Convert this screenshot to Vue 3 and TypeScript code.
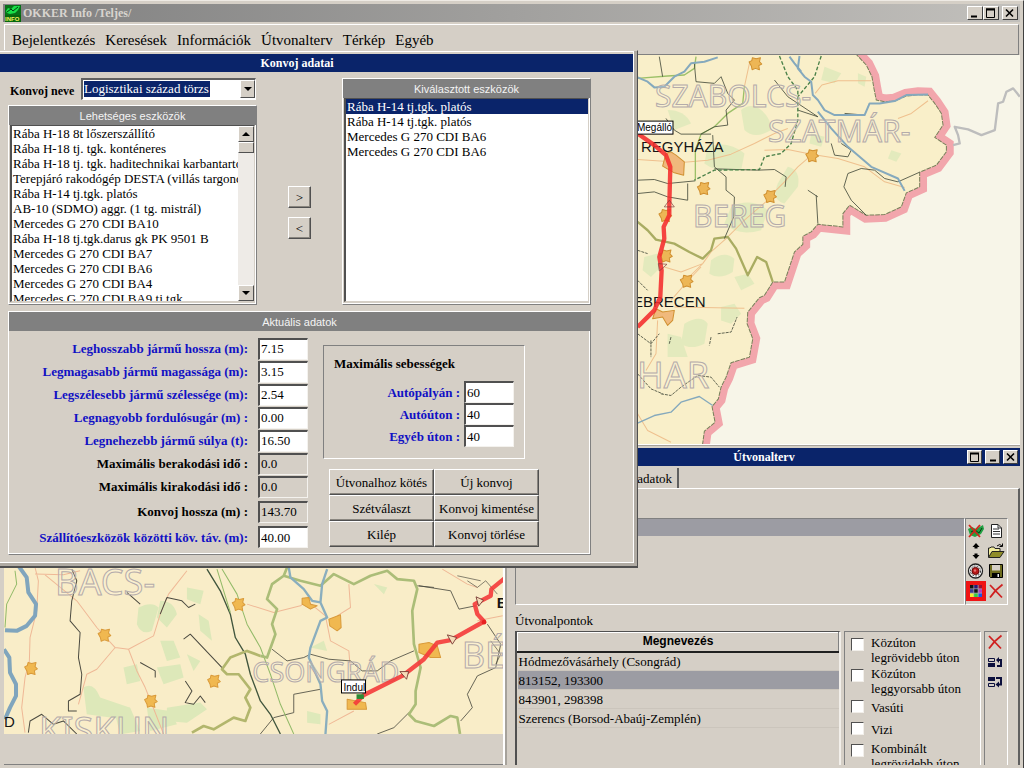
<script setup lang="ts">
import { ref } from 'vue'

interface Field {
  id: string
  label: string
  value: string
  kind: 'edit' | 'locked'
}

const menus = ['Bejelentkezés', 'Keresések', 'Információk', 'Útvonalterv', 'Térkép', 'Egyéb']

const convoy = ref('Logisztikai század törzs')

const available = [
  'Rába H-18 8t lőszerszállító',
  'Rába H-18 tj. tgk. konténeres',
  'Rába H-18 tj. tgk. haditechnikai karbantartó',
  'Terepjáró rakodógép DESTA (villás targonca)',
  'Rába H-14 tj.tgk. platós',
  'AB-10 (SDMO) aggr. (1 tg. mistrál)',
  'Mercedes G 270 CDI BA10',
  'Rába H-18 tj.tgk.darus gk PK 9501 B',
  'Mercedes G 270 CDI BA7',
  'Mercedes G 270 CDI BA6',
  'Mercedes G 270 CDI BA4',
  'Mercedes G 270 CDI BA9 tj.tgk',
]

const chosen = [
  'Rába H-14 tj.tgk. platós',
  'Rába H-14 tj.tgk. platós',
  'Mercedes G 270 CDI BA6',
  'Mercedes G 270 CDI BA6',
]

const availableSel = ref<number[]>([])
const chosenSel = ref<number[]>([0])

const fields = ref<Field[]>([
  { id: 'len', label: 'Leghosszabb jármű hossza (m):', value: '7.15', kind: 'edit' },
  { id: 'hgt', label: 'Legmagasabb jármű magassága (m):', value: '3.15', kind: 'edit' },
  { id: 'wid', label: 'Legszélesebb jármű szélessége (m):', value: '2.54', kind: 'edit' },
  { id: 'rad', label: 'Legnagyobb fordulósugár (m) :', value: '0.00', kind: 'edit' },
  { id: 'wgt', label: 'Legnehezebb jármű súlya (t):', value: '16.50', kind: 'edit' },
  { id: 'load', label: 'Maximális berakodási idő :', value: '0.0', kind: 'locked' },
  { id: 'unload', label: 'Maximális kirakodási idő :', value: '0.0', kind: 'locked' },
  { id: 'total', label: 'Konvoj hossza (m) :', value: '143.70', kind: 'locked' },
  { id: 'dist', label: 'Szállítóeszközök közötti köv. táv. (m):', value: '40.00', kind: 'edit' },
])

const speeds = ref([
  { id: 'motorway', label: 'Autópályán :', value: '60' },
  { id: 'highway', label: 'Autóúton :', value: '40' },
  { id: 'other', label: 'Egyéb úton :', value: '40' },
])

const actions = [
  'Útvonalhoz kötés', 'Új konvoj',
  'Szétválaszt', 'Konvoj kimentése',
  'Kilép', 'Konvoj törlése',
]

const points = [
  'Hódmezővásárhely (Csongrád)',
  '813152, 193300',
  '843901, 298398',
  'Szerencs (Borsod-Abaúj-Zemplén)',
]
const activePoint = ref(1)

const modes = ref([
  { label: 'Közúton legrövidebb úton', on: false },
  { label: 'Közúton leggyorsabb úton', on: false },
  { label: 'Vasúti', on: false },
  { label: 'Vizi', on: false },
  { label: 'Kombinált legrövidebb úton', on: false },
])

const border =
  'M672 160L705 195L722 230L728 265L735 300L760 305L790 303L825 288L860 284L890 285L910 310L930 340L935 375L910 412L945 435L945 455L915 495L865 516L865 560L825 578L810 620L760 643L705 645L655 615L635 640L635 680L560 672L540 695L515 708L515 732L490 755L475 800L460 845L425 845L400 885L385 892L350 935L348 970L365 1015L355 1070L300 1087L285 1130L270 1160L262 1195L243 1218L252 1265L220 1292L212 1350'
const country = border + 'L0 1350L0 160Z'

const towns = [
  [368, 190, 14], [540, 466, 16], [214, 564, 15], [415, 588, 17], [98, 645, 14],
  [98, 766, 12], [162, 842, 14],
]
const southTowns = [
  [308, 222, 14], [90, 322, 16], [714, 130, 18], [634, 360, 12], [452, 420, 19],
]
</script>

<template>
  <div class="app">
    <header class="titlebar">
      <svg class="appicon" viewBox="0 0 16 17" aria-hidden="true">
        <rect width="16" height="10" fill="#087018" />
        <path d="M1 6L3 3L6 4L9 1L15 1L13 5L10 8L5 9L2 8Z" fill="#18e048" />
        <path d="M2 7L6 4L8 6L13 2" stroke="#043c0c" fill="none" />
        <rect y="10" width="16" height="7" fill="#05690c" />
        <text x="0" y="16" font-size="6" font-weight="700" font-family="Liberation Sans, sans-serif" fill="#f5f060">INFO</text>
      </svg>
      <h1>OKKER Info /Teljes/</h1>
      <div class="winbtns">
        <button class="wb" aria-label="Kis méret"><svg viewBox="0 0 12 10"><path d="M2 8.5h6" stroke="#000" stroke-width="2" /></svg></button>
        <button class="wb" aria-label="Teljes méret"><svg viewBox="0 0 12 10"><path d="M1.5 1v8.500h8V1M1 1h9" stroke="#000" fill="none" /><path d="M1 1.500h9" stroke="#000" stroke-width="2" /></svg></button>
        <button class="wb last" aria-label="Bezárás"><svg viewBox="0 0 12 10"><path d="M2 1.500L9 8.500M9 1.500L2 8.500" stroke="#000" stroke-width="1.600" /></svg></button>
      </div>
    </header>

    <nav class="menubar">
      <button v-for="m in menus" :key="m">{{ m }}</button>
    </nav>

    <main class="desktop">
      <svg class="map" viewBox="4 55 1016 678" preserveAspectRatio="xMinYMin slice" role="img" aria-label="Térkép">
        <rect x="4" y="55" width="1016" height="678" fill="#f7f5e8" />
        <!-- north-east section -->
        <g transform="translate(630 0) scale(.33333)" fill="none" stroke-linejoin="round">
          <path :d="border" stroke="#f2a6ac" stroke-width="44" stroke-linejoin="miter" />
          <path :d="country" fill="#f9efc9" />
          <g fill="#dce9b9" opacity=".75">
            <path d="M330 330q30-25 60 0t30 60q-50 30-80 0z" />
            <path d="M230 440q60-20 110 20l-10 50q-70 10-110-20z" />
            <path d="M470 500q40 10 30 60l-40 50q-40-10-20-60z" />
            <path d="M110 330q50 0 70 40l-50 20z" />
            <path d="M580 200l50 20-20 30-40-10zM680 220l25 10-5 30-20-10z" />
            <path d="M540 400l40 10-10 30-35-10zM780 450l30 10-15 25-25-10z" />
            <path d="M240 780q40-30 70-5l-5 40q-40 25-70 5z" />
            <path d="M40 770l40-10 10 40-30 30-25-20z" />
            <path d="M160 970q50-30 70 0l-10 60q-40 20-70 0zM270 920l40-10 20 30-30 30-30-10z" />
            <path d="M110 1000l40 10 20 60-60 0zM310 830l40-10 20 30-40 20z" />
            <path d="M300 620q60-30 110 10l-20 60q-70 20-110-20z" />
          </g>
          <path :d="border" stroke="#77805a" stroke-width="3" stroke-dasharray="14 3" />
          <g stroke="#efc08e" stroke-width="3">
            <path d="M552 280L572 255L620 242L720 242M800 355L840 340L890 302M160 486L230 480L300 462L370 430L430 400L470 385M400 450L470 448L540 462L620 475L700 500L760 545L820 562M540 466L500 500L460 545L415 590M20 478L110 484M340 260L355 190M285 715L340 660L410 600" />
            <path d="M100 800L150 815L215 790L240 755L285 715M120 900L170 842L210 800M130 920L340 924M80 960L75 1060L45 1110M20 1240L50 1290L120 1325M162 842L215 790" />
          </g>
          <g stroke="#9aae66" stroke-width="4">
            <path d="M195 170L190 205L160 225L110 228L20 235M340 258L335 310L290 340L250 380L210 402L193 450L193 540" stroke="#9cc068" />
            <path d="M20 665L50 690L75 718L130 730L175 755L215 775L240 750L250 715L290 710L315 745L350 825L378 770L405 785L425 845" stroke="#a9ac62" stroke-width="7" />
          </g>
          <g stroke="#454b3b" stroke-width="2.500">
            <path d="M85 170L95 230M190 190L195 245L250 250L270 230L290 280L310 300L285 330L290 375L250 380L210 402M20 540L70 538L110 550L193 542M20 580L70 575L110 590L170 600L170 550M245 405L250 500L285 530L285 570L310 590L308 650L280 715M250 506L380 510L430 508L465 530L462 560M555 585L560 670M530 570L560 590M105 355L130 390L150 402L240 402" />
            <path d="M600 430L610 465L650 470L660 450L630 430M690 505L650 520L638 560L660 600L705 645M690 505L730 510L760 535L800 545L865 516M500 330L560 350L470 290L430 240M640 340L700 345" />
            <path d="M90 1180L120 1185L150 1160L200 1125L240 1130L265 1160M20 1120L60 1165L95 1180M60 1020L60 1070M120 1010L115 1030M240 1010L235 1035M260 1000L300 995L318 950M20 750L50 760M20 840L50 870M20 1000L60 1030L85 1000" stroke-dasharray="9 3" />
          </g>
          <g stroke="#4a8048" stroke-width="4" stroke-dasharray="11 6">
            <path d="M445 168L470 230L500 270L500 360L480 430L450 460L400 470L385 508L250 510L190 540M570 168L550 230L500 290" />
          </g>
          <g stroke="#85a9bd" stroke-width="6">
            <path d="M20 232L50 245L70 262L100 260L130 230L160 215L180 190L220 185L260 172" />
            <path d="M505 168L500 205L520 230L540 245L545 285L560 300L580 330L610 345L700 345L715 310L745 310L790 303L825 285L890 283" />
            <path d="M475 170L490 190L510 215M560 335L600 385L650 440L720 500L800 535L820 572" />
            <path d="M20 1268L70 1245L120 1235L150 1205L205 1188L245 1215" stroke-width="4" />
          </g>
          <path d="M965 435L985 430L980 405L970 380L1010 388L1050 405L1090 390L1100 310L1115 305L1125 275L1145 265L1165 290" stroke="#bdbdbd" stroke-width="7" />
          <g fill="#edb655" stroke="#d09030" stroke-width="3">
            <path v-for="(t, i) in towns" :key="i" :d="`M${t[0] - t[2]} ${t[1] - 4}l8-4l2-9l11 3l13-3l-3 12l7 7l-9 5l2 12l-12-4l-10 4l-2-10z`" />
            <path d="M105 460L120 455L135 465L160 485L158 525L130 518L95 498Z" fill="#f0b97c" />
            <path d="M75 925L95 935L130 930L125 960L110 975L95 950L65 955Z" fill="#f0b97c" />
          </g>
        </g>
        <g class="region">
          <text x="654" y="107">SZABOLCS-</text>
          <text x="767" y="142">SZATMÁR-</text>
          <text x="692" y="227">BEREG</text>
          <text class="large" x="636" y="388">HAR</text>
        </g>
        <g class="city">
          <text x="640" y="152">REGYHÁZA</text>
          <text x="632" y="307">EBRECEN</text>
        </g>
        <g transform="translate(630 0) scale(.33333)" fill="none">
          <path d="M20 400L70 435L105 465L118 500L115 615L115 645L98 680L100 715L85 770L92 810L88 890L70 930L40 960L20 980" stroke="#f42c2c" stroke-opacity=".88" stroke-width="13" stroke-linejoin="round" />
          <path d="M100 620L115 600L130 620ZM82 790L108 792L85 812Z" stroke="#7a3838" stroke-width="2" />
        </g>
        <g>
          <rect x="630" y="121" width="42" height="13" fill="#fff" stroke="#000" />
          <text class="flag" x="636" y="131">Megálló</text>
        </g>

        <!-- southern section -->
        <g transform="translate(0 560) scale(.33333)" fill="none" stroke-linejoin="round">
          <path d="M12 0H1506V519H12Z" fill="#f9edc8" />
          <g fill="#dae8b8" opacity=".9">
            <path d="M415 140q40-20 60 0l-20 70q-30 15-45-20zM480 120q40 0 50 40l-30 40-30-30z" />
            <path d="M560 80l50 10-10 40-40-15zM595 160l30 20 10 60-35-30z" />
            <path d="M250 380q30-20 50 30l90 30-20 35-110-15zM370 320l40-10 10 50-40 10z" />
            <path d="M470 320l70-10 10 40-60 20zM500 440l100-15 20 20-60 40-60-5zM480 240l40 0 20 50-40 10zM560 280l40 20-20 30z" />
            <path d="M440 440l70 10 20 40-80 20zM340 440l50 0 30 70-60 10z" />
            <path d="M1120 70l40 10-10 20zM930 260l40-20 10 30zM920 450l40 10 0 30-40-5z" />
          </g>
          <g stroke="#efb896" stroke-width="3">
            <path d="M105 20L115 60L110 150L90 230L88 300L75 350L65 440L75 515M105 40L190 42L240 30M135 42L230 120L290 200L345 260L385 265L460 225L480 160L505 100L560 30M385 265L410 330L435 380L455 430L490 519M345 260L290 325L260 340L235 430" />
            <path d="M740 130L820 155L900 135L920 120L975 165L990 240L1045 270L1050 330M1045 70L1050 140L1010 165M985 490L1060 450M1325 25L1400 70L1430 80M1430 180L1506 165" />
          </g>
          <g stroke="#4b4a40" stroke-width="3">
            <path d="M215 25L230 60L215 120L210 180L240 215L235 290L245 340L240 400L205 420L205 450L230 450M500 110L545 120L565 140L585 130M500 110L480 160M380 95L420 130M550 235L570 220L665 320M420 305L465 330L465 350M555 360L575 390L555 425L580 430L600 405L615 425M85 515L90 480L125 460L160 490L190 480L230 519" />
            <path d="M815 265L860 300L910 290L930 280L985 295L1050 300L1085 330L1130 330L1170 300L1240 270M1255 75L1350 90L1375 145L1425 135M1250 75L1300 80M1460 190L1500 250L1485 320L1430 345L1400 400L1415 440L1380 480M1225 455L1180 500L1130 519M780 519L820 470L880 455L880 400L960 385" stroke-width="2.500" />
            <path d="M1400 60L1430 80L1455 60L1490 100M1370 45L1440 60" stroke-width="2" />
            <path d="M1470 240L1500 280L1485 310" stroke-width="2" />
          </g>
          <path d="M620 25L660 90L690 160L705 230L735 280L750 340L780 420L810 460L840 519" stroke="#40553d" stroke-width="4" />
          <path d="M665 25L710 100L740 190L780 260L810 340L840 430L880 519M690 155L650 25M45 30L50 70L20 130L15 200" stroke="#92ba68" stroke-width="3" />
          <path d="M575 515L610 495L640 505L700 470L735 480L750 440L735 410L750 385L715 340L680 340L665 325L690 290L740 270L780 285" stroke="#b2b66d" stroke-width="8" />
          <path d="M780 285L800 290L825 220L815 190L830 145L800 115L815 70L850 45L860 20M850 45L900 60L960 75L1000 40L1060 70L1110 45L1160 30L1190 55L1240 60L1250 85L1235 150L1240 250L1260 320L1245 390L1245 430L1225 460L1245 480L1300 495L1350 465L1370 470L1378 519" stroke="#abbd78" stroke-width="8" />
          <path d="M55 15L80 50L85 95L108 130L105 165L80 195L50 210L15 208M12 265L28 290L30 335L48 370L48 405L30 440L15 475" stroke="#80a5bd" stroke-width="12" />
          <path d="M865 20L870 50L910 85L935 120L960 125L965 70L980 25M960 125L980 170L960 180L930 260L925 290L960 370L965 420L980 450L975 519" stroke="#8aaebe" stroke-width="7" />
          <g fill="#f0b850" stroke="#d99a3a" stroke-width="3">
            <path v-for="(t, i) in southTowns" :key="i" :d="`M${t[0] - t[2]} ${t[1] - 4}l8-4l2-9l11 3l13-3l-3 12l7 7l-9 5l2 12l-12-4l-10 4l-2-10z`" />
            <path d="M905 112L925 110L930 130L950 135L930 145L905 130ZM985 175L1020 162L1022 200L1010 210L988 195ZM1255 250L1285 245L1310 255L1320 290L1290 290L1255 275ZM1040 415L1095 425L1098 445L1040 445Z" />
          </g>
        </g>
        <g class="region">
          <text class="large" x="55" y="594">BÁCS-</text>
          <text class="large" x="39" y="742">KISKUN</text>
          <text class="small" x="252" y="681">CSONGRÁD</text>
          <text class="large" x="461" y="667">BÉ</text>
        </g>
        <text class="city" x="4" y="726">D</text>
        <text class="city strong" x="496" y="607">B</text>
        <g transform="translate(250 560) scale(.33333)" fill="none">
          <path d="M765 50L722 85L720 105L672 130L680 160L700 182L600 238L560 245L540 270L520 295L455 345L340 402L312 430" stroke="#f43a3a" stroke-opacity=".9" stroke-width="13" stroke-linejoin="round" />
          <circle cx="700" cy="184" r="7" fill="#e62222" />
          <path d="M590 222L618 230L605 250ZM448 332L474 332L468 355ZM676 108L698 118L684 136Z" fill="#f6dcb8" stroke="#70302c" stroke-width="2.500" />
          <path d="M318 400h22v14h-22z" fill="#2c8a35" />
        </g>
        <rect x="341" y="679" width="24" height="13" fill="#fff" stroke="#000" />
        <text class="flag" x="343" y="690">Indul</text>
      </svg>
      <div class="mapstatus"></div>
      <section class="route">
        <header class="bluebar">
          <h2>Útvonalterv</h2>
          <div class="winbtns">
            <button class="wb" aria-label="Teljes méret"><svg viewBox="0 0 12 10"><path d="M1.500 1v8.500h8V1" stroke="#000" fill="none" /><path d="M1 1.500h9" stroke="#000" stroke-width="2" /></svg></button>
            <button class="wb" aria-label="Kis méret"><svg viewBox="0 0 12 10"><path d="M3 8.500h6" stroke="#000" stroke-width="2" /></svg></button>
            <button class="wb" aria-label="Bezárás"><svg viewBox="0 0 12 10"><path d="M2 1.500L9 8.500M9 1.500L2 8.500" stroke="#000" stroke-width="1.600" /></svg></button>
          </div>
        </header>
        <div class="tabs" role="tablist">
          <button role="tab" aria-selected="true">adatok</button>
        </div>
        <div class="page">
          <div class="upper">
            <div class="routelist"><div class="routerow"></div></div>
            <div class="tools">
              <button aria-label="Útvonal törlése térképről">
                <svg viewBox="0 0 18 18"><path d="M1 7L5 5L9 7L16 3L17 7L14 12L8 15L3 13Z" fill="#22a043" /><path d="M4 10L8 8L12 11L15 6" stroke="#063c10" fill="none" /><path d="M2 3L13 15M13 3L2 15" stroke="#d2261c" stroke-width="1.800" /></svg>
              </button>
              <button aria-label="Új">
                <svg viewBox="0 0 18 18"><path d="M4.500 2.500H11L14.500 6V15.500H4.500Z" fill="#fff" stroke="#222" /><path d="M11 2.500V6H14.500M6 7h6M6 9.500h7M6 12h7" stroke="#333" fill="none" /></svg>
              </button>
              <button aria-label="Mozgatás">
                <svg viewBox="0 0 18 18"><path d="M9 1L12.500 5H10.500V6.500H7.500V5H5.500ZM9 17L5.500 13H7.500V11.500H10.500V13H12.500Z" fill="#000" /></svg>
              </button>
              <button aria-label="Megnyitás">
                <svg viewBox="0 0 18 18"><path d="M1.500 15V6H3L4 5H7L8 6.500H13V9" fill="#f2ec9c" stroke="#222" /><path d="M1.500 15.500L5 9.500H17L13 15.500Z" fill="#8f8c28" stroke="#222" /><path d="M10 4q3-3 5 0M15.500 1.500V4.500H12.500" stroke="#000" fill="none" /></svg>
              </button>
              <button aria-label="Cél">
                <svg viewBox="0 0 18 18"><circle cx="8.500" cy="9" r="7" fill="#fff" stroke="#222" stroke-width="1.300" /><circle cx="8.500" cy="9" r="5" fill="none" stroke="#333" stroke-dasharray="2 1" /><circle cx="8.500" cy="9" r="3.600" fill="#b81818" stroke="#5b0808" /><circle cx="8" cy="8.500" r="1.200" fill="#e87070" /></svg>
              </button>
              <button aria-label="Mentés">
                <svg viewBox="0 0 18 18"><path d="M2.500 2.500H15.500V15.500H3.500L2.500 14.500Z" fill="#6d6b1e" stroke="#000" /><path d="M5 3H13V8.500H5Z" fill="#d5cfc6" /><path d="M5 11H13V15.500H5Z" fill="#000" /><path d="M10.500 12H12V15H10.500Z" fill="#eee" /></svg>
              </button>
              <button class="hot" aria-label="Színek">
                <svg viewBox="0 0 18 18"><path d="M3 3h12v12H3z" fill="#a8a8b0" /><path d="M3 3h3.500v3.500H3z" fill="#111" /><path d="M7.200 3h3.500v3.500H7.200z" fill="#281a78" /><path d="M11.500 3H15v3.500h-3.500z" fill="#a01030" /><path d="M3 7.200h3.500v3.500H3z" fill="#3b3b90" /><path d="M7.200 7.200h3.500v3.500H7.200z" fill="#111" /><path d="M11.500 7.200H15v3.500h-3.500z" fill="#b040c0" /><path d="M3 11.500h3.500V15H3z" fill="#f0ec30" /><path d="M7.200 11.500h3.500V15H7.200z" fill="#30d040" /><path d="M11.500 11.500H15V15h-3.500z" fill="#2050e0" /></svg>
              </button>
              <button aria-label="Törlés">
                <svg viewBox="0 0 18 18"><path d="M3 3L15 15.500M15.500 2.500Q8 8 3 15.500" stroke="#cf2020" stroke-width="1.800" fill="none" /></svg>
              </button>
            </div>
          </div>
          <h3>Útvonalpontok</h3>
          <div class="lower">
            <div class="tablebox">
              <table>
                <thead><tr><th scope="col">Megnevezés</th></tr></thead>
                <tbody>
                  <tr v-for="(p, i) in points" :key="p" :class="{ active: i === activePoint }" @click="activePoint = i"><td>{{ p }}</td></tr>
                </tbody>
              </table>
            </div>
            <div class="modes">
              <label v-for="m in modes" :key="m.label"><input v-model="m.on" type="checkbox" /><span>{{ m.label }}</span></label>
            </div>
            <div class="sidetools">
              <button aria-label="Pont törlése">
                <svg viewBox="0 0 18 18"><path d="M3 3L15 15.500M15.500 2.500Q8 8 3 15.500" stroke="#cf2020" stroke-width="1.800" fill="none" /></svg>
              </button>
              <button aria-label="Beszúrás elé">
                <svg viewBox="0 0 18 18"><path d="M2.500 5.500h6v3h-6z" fill="none" stroke="#0b0f3c" /><path d="M2 10h7v4H2z" fill="#0b0f3c" /><path d="M11 13h4V7H12" stroke="#0b0f3c" stroke-width="2" fill="none" /><path d="M10 7L13 4V10Z" fill="#0b0f3c" /></svg>
              </button>
              <button aria-label="Beszúrás mögé">
                <svg viewBox="0 0 18 18"><path d="M2 4h7v4H2z" fill="#0b0f3c" /><path d="M2.500 10.500h6v3h-6z" fill="none" stroke="#0b0f3c" /><path d="M10 5h5V11.500H12" stroke="#0b0f3c" stroke-width="2" fill="none" /><path d="M9.500 11.500L13 8.500V14.500Z" fill="#0b0f3c" /></svg>
              </button>
            </div>
          </div>
        </div>
      </section>
    </main>

    <section class="dialog" role="dialog" aria-labelledby="dlg-title">
      <header class="bluebar"><h2 id="dlg-title">Konvoj adatai</h2></header>
      <div class="dbody">
        <div class="pickers">
          <div class="left">
            <div class="combo">
              <label for="convoy">Konvoj neve</label>
              <div class="combobox">
                <select id="convoy" v-model="convoy"><option>Logisztikai század törzs</option></select>
                <span class="arrow"><svg viewBox="0 0 12 12"><path d="M2 4h8L6 8z" /></svg></span>
              </div>
            </div>
            <div class="panel grow">
              <label class="cap" for="avail">Lehetséges eszközök</label>
              <div class="listbox">
                <select id="avail" v-model="availableSel" multiple size="12">
                  <option v-for="(a, i) in available" :key="i" :value="i">{{ a }}</option>
                </select>
                <div class="scroll">
                  <button aria-label="Fel"><svg viewBox="0 0 12 12"><path d="M2 8h8L6 4z" /></svg></button>
                  <div class="thumb"></div>
                  <button class="down" aria-label="Le"><svg viewBox="0 0 12 12"><path d="M2 4h8L6 8z" /></svg></button>
                </div>
              </div>
            </div>
          </div>
          <div class="movers">
            <button>&gt;</button>
            <button>&lt;</button>
          </div>
          <div class="panel right">
            <label class="cap" for="chosen">Kiválasztott eszközök</label>
            <div class="listbox">
              <select id="chosen" v-model="chosenSel" multiple size="12">
                <option v-for="(c, i) in chosen" :key="i" :value="i">{{ c }}</option>
              </select>
            </div>
          </div>
        </div>

        <div class="panel current">
          <h3 class="cap">Aktuális adatok</h3>
          <div class="currentbody">
            <div class="form">
              <template v-for="f in fields" :key="f.id">
                <label :for="f.id" :class="f.kind">{{ f.label }}</label>
                <input :id="f.id" v-model="f.value" type="text" :class="f.kind" :readonly="f.kind === 'locked'" />
              </template>
            </div>
            <div class="side">
              <fieldset>
                <legend>Maximális sebességek</legend>
                <div class="speeds">
                  <template v-for="s in speeds" :key="s.id">
                    <label :for="s.id" class="edit">{{ s.label }}</label>
                    <input :id="s.id" v-model="s.value" type="text" />
                  </template>
                </div>
              </fieldset>
              <div class="actions">
                <button v-for="a in actions" :key="a">{{ a }}</button>
              </div>
            </div>
          </div>
        </div>
      </div>
    </section>
  </div>
</template>

<style>
html,
body {
  margin: 0;
  overflow: hidden;
}
</style>

<style scoped>
* {
  box-sizing: border-box;
}
.app {
  position: relative;
  display: flex;
  flex-direction: column;
  height: 100vh;
  padding: 3px;
  overflow: hidden;
  background: #d5cfc6;
  border-top: 1px solid #eeeae4;
  border-right: 1px solid #404040;
  color: #000;
  font: 13px/15px "Liberation Serif", serif;
}
button {
  padding: 0;
  color: #000;
  font: inherit;
  background: #d5cfc6;
  border: 0;
}
h1,
h2,
h3 {
  margin: 0;
  font: inherit;
}
.titlebar {
  display: flex;
  align-items: center;
  gap: 2px;
  height: 18px;
  flex: none;
  padding: 0 2px;
  background: linear-gradient(90deg, #808080, #c2c0bc);
}
.appicon {
  width: 16px;
  height: 17px;
}
.titlebar h1 {
  flex: 1;
  color: #d8d4ce;
  font-size: 12px;
  font-weight: 700;
}
.winbtns {
  display: flex;
}
.wb {
  display: grid;
  place-items: center;
  width: 15px;
  height: 14px;
  border: 1px solid;
  border-color: #fff #404040 #404040 #fff;
}
.wb.last {
  margin-left: 3px;
}
.wb svg {
  width: 12px;
  height: 10px;
}
.titlebar .wb {
  width: 16px;
}
.menubar {
  display: flex;
  align-items: center;
  gap: 10px;
  height: 31px;
  flex: none;
  margin: 2px 1px 0;
  padding-left: 7px;
  border: 1px solid;
  border-color: #fff #808080 #808080 #fff;
  font-size: 15px;
  line-height: 18px;
}
.desktop {
  position: relative;
  display: flex;
  flex-direction: column;
  flex: 1;
  min-height: 0;
  margin: 0 0 0 1px;
  overflow: hidden;
}
.map {
  display: block;
  width: 100%;
  flex: 1;
  min-height: 0;
}
.mapstatus {
  height: 31px;
  flex: none;
  border-bottom: 1px solid #808080;
}
.region text {
  fill: #fffaf0;
  fill-opacity: 0.2;
  stroke: #b4abaa;
  stroke-width: 1;
  font: 30px "Noto Sans", sans-serif;
}
.region .large {
  font-size: 36px;
}
.region .small {
  font-size: 27px;
}
.city,
.city text {
  fill: #151515;
  font: 15px "Liberation Sans", sans-serif;
}
.strong {
  font-weight: 700;
}
.flag {
  font: 10px "Liberation Sans", sans-serif;
}

/* route window */
.route {
  position: absolute;
  top: 389px;
  right: 0;
  bottom: 0;
  left: 499px;
  display: flex;
  flex-direction: column;
  padding: 3px 0 0 3px;
  overflow: hidden;
  background: #d5cfc6;
  border: 1px solid #fff;
  border-width: 1px 0 0 2px;
  box-shadow: inset 2px 1px #a6a29b;
}
.bluebar {
  position: relative;
  display: flex;
  align-items: center;
  justify-content: center;
  height: 18px;
  flex: none;
  background: #0a246a;
  color: #fff;
}
.bluebar h2 {
  font-size: 12px;
  font-weight: 700;
}
.bluebar .winbtns {
  position: absolute;
  right: 2px;
  gap: 3px;
}
.tabs {
  display: flex;
  height: 22px;
  flex: none;
  padding: 2px 0 0 3px;
}
.tabs button {
  width: 168px;
  padding-right: 5px;
  text-align: right;
  border-right: 2px solid #606060;
}
.page {
  display: flex;
  flex-direction: column;
  flex: 1;
  min-height: 0;
  padding: 29px 10px 0 7px;
  border-top: 1px solid #fff;
  border-right: 2px solid #606060;
}
.upper {
  display: flex;
  height: 87px;
  flex: none;
}
.routelist {
  flex: 1;
  border: 1px solid;
  border-color: #808080 #fff #fff #808080;
}
.routerow {
  height: 17px;
  background: #9c9ca3;
}
.tools {
  display: grid;
  grid-template-columns: 20px 20px;
  grid-template-rows: repeat(4, 20px);
  width: 43px;
  padding-top: 2px;
  border: 1px solid;
  border-color: #808080 #fff #fff #808080;
}
.tools button,
.sidetools button {
  display: grid;
  place-items: center;
  width: 20px;
  height: 20px;
}
.tools svg,
.sidetools svg {
  width: 18px;
  height: 18px;
}
.tools .hot {
  background: #f01414;
}
.page h3 {
  padding: 8px 0 3px;
}
.lower {
  display: flex;
  flex: 1;
  gap: 3px;
  min-height: 0;
}
.tablebox {
  flex: 1;
  border-top: 1px solid #505050;
  border-left: 2px solid #505050;
  border-right: 2px solid #f2efea;
}
table {
  width: 100%;
  border-collapse: collapse;
}
th {
  height: 19px;
  padding: 0;
  border: 1px solid #fff;
  border-right-color: #808080;
  border-bottom: 2px solid #202020;
  font: 700 12px/15px "Liberation Sans", sans-serif;
}
td {
  height: 19px;
  padding: 0 1px;
  border-bottom: 1px solid #cbc5bc;
}
.active td {
  background: #9c9ca3;
}
.modes {
  display: flex;
  flex-direction: column;
  gap: 1px;
  width: 137px;
  flex: none;
  padding: 3px 0 0 6px;
  overflow: hidden;
  border: 1px solid;
  border-color: #808080 #fff #fff #808080;
  border-bottom: 0;
}
.modes label {
  display: flex;
  gap: 7px;
  align-items: center;
  min-height: 21px;
  flex: none;
}
.modes span {
  width: 100px;
}
.modes input {
  appearance: none;
  width: 13px;
  height: 13px;
  flex: none;
  align-self: flex-start;
  margin: 3px 0 0;
  background: #fff;
  border: 1px solid;
  border-color: #505050 #f2efea #f2efea #505050;
}
.modes input:checked {
  background: #0a246a;
}
.sidetools {
  display: flex;
  flex-direction: column;
  width: 24px;
  flex: none;
  border: 1px solid;
  border-color: #808080 #fff #fff #808080;
  border-bottom: 0;
}

/* convoy dialog */
.dialog {
  position: absolute;
  top: 49px;
  left: -40px;
  width: 678px;
  background: #d5cfc6;
  border: 1px solid #d5cfc6;
  border-right: 1px solid #505050;
  border-bottom: 2px solid #505050;
  box-shadow: inset -3px -3px #b0aba3, inset -4px -4px #fff, inset 0 1px #fff;
  padding: 3px 4px 0 0;
}
.dbody {
  display: flex;
  flex-direction: column;
  gap: 6px;
  padding: 6px 42px 11px 47px;
}
.pickers {
  display: flex;
  justify-content: space-between;
  height: 227px;
}
.left {
  display: flex;
  flex-direction: column;
  gap: 5px;
  width: 249px;
}
.combo {
  display: flex;
  align-items: center;
  justify-content: space-between;
  height: 22px;
  padding: 0 1px 0 2px;
  font-size: 12px;
  font-weight: 700;
}
.combo label {
  padding-top: 5px;
}
.combobox {
  position: relative;
  width: 175px;
}
.combobox select {
  display: block;
  appearance: none;
  width: 100%;
  height: 22px;
  padding: 0 20px 2px 1px;
  color: #fff;
  font: 13px/15px "Liberation Serif", serif;
  background: #fff linear-gradient(#0a246a, #0a246a) 1px 1px / 126px 16px no-repeat;
  border: 1px solid;
  border-color: #606060 #fff #fff #606060;
  border-width: 2px 1px 1px 2px;
  border-radius: 0;
}
.combobox option {
  color: #000;
}
.arrow {
  position: absolute;
  top: 2px;
  right: 1px;
  display: grid;
  place-items: center;
  width: 15px;
  height: 18px;
  background: #d5cfc6;
  border: 1px solid;
  border-color: #fff #505050 #505050 #fff;
  pointer-events: none;
}
.arrow svg {
  width: 12px;
  height: 12px;
}
.panel {
  display: flex;
  flex-direction: column;
  border: 1px solid;
  border-color: #fff #808080 #808080 #fff;
  box-shadow: inset -1px -1px #fff;
}
.grow {
  flex: 1;
  min-height: 0;
}
.cap {
  height: 19px;
  flex: none;
  line-height: 20px;
  background: #808080;
  color: #f4f4f4;
  font-family: "Liberation Sans", sans-serif;
  font-size: 11px;
  text-align: center;
}
.listbox {
  display: flex;
  flex: 1;
  min-height: 0;
  margin: 0 1px 2px;
  background: #fff;
  border: 1px solid;
  border-color: #505050 #d5cfc6 #d5cfc6 #505050;
  border-left-width: 2px;
}
.listbox select {
  flex: 1;
  min-width: 0;
  height: 100%;
  padding: 0;
  overflow: hidden;
  color: #000;
  font: 13px/15px "Liberation Serif", serif;
  background: #fff;
  border: 0;
  border-radius: 0;
  outline: 0;
  scrollbar-width: none;
}
.listbox option {
  height: 15px;
  min-height: 15px;
  padding: 0 1px;
  line-height: 15px;
}
.listbox option:checked {
  color: #fff;
  background: #0a246a linear-gradient(#0a246a, #0a246a);
}
.scroll {
  display: flex;
  flex-direction: column;
  width: 16px;
  flex: none;
  background: #eeebe7;
}
.scroll button,
.thumb {
  display: grid;
  place-items: center;
  height: 16px;
  background: #d5cfc6;
  border: 1px solid;
  border-color: #fff #505050 #505050 #fff;
}
.thumb {
  height: 11px;
}
.scroll svg {
  width: 12px;
  height: 12px;
}
.scroll .down {
  margin-top: auto;
}
.movers {
  display: flex;
  flex-direction: column;
  gap: 9px;
  padding-top: 108px;
}
.movers button {
  width: 23px;
  height: 22px;
}
.movers button,
.actions button {
  border: 1px solid;
  border-color: #fff #505050 #505050 #fff;
  box-shadow: inset -1px -1px #8a867f;
}
.right {
  width: 249px;
}
.currentbody {
  display: flex;
  gap: 15px;
  padding: 6px 50px 5px 10px;
}
.form {
  display: grid;
  grid-template-columns: 1fr 50px;
  grid-template-rows: repeat(7, 23px) 27px 24px;
  column-gap: 10px;
  width: 289px;
  align-items: center;
}
.form label,
.speeds label,
legend {
  font-weight: 700;
  text-align: right;
  white-space: nowrap;
}
.edit {
  color: #1111c4;
}
.form input,
.speeds input {
  width: 100%;
  height: 22px;
  padding: 0 0 0 1px;
  color: #000;
  font: 13px/15px "Liberation Serif", serif;
  background: #fff;
  border: 1px solid;
  border-color: #505050 #f4f2ee #f4f2ee #505050;
  border-width: 2px 1px 1px 2px;
  border-radius: 0;
}
.form .locked:read-only {
  background: #d5cfc6;
}
.side {
  padding-top: 8px;
}
fieldset {
  display: flex;
  flex-direction: column;
  width: 202px;
  height: 114px;
  margin: 0;
  padding: 10px 10px 0;
  border: 1px solid;
  border-color: #808080 #fff #fff #808080;
}
legend {
  float: left;
  padding: 0;
  text-align: left;
}
.speeds {
  display: grid;
  grid-template-columns: 1fr 50px;
  grid-auto-rows: 22px;
  column-gap: 4px;
  align-items: center;
  padding-top: 10px;
}
.actions {
  display: grid;
  grid-template-columns: 105px 105px;
  grid-auto-rows: 26px;
  padding: 10px 0 0 6px;
}
</style>
